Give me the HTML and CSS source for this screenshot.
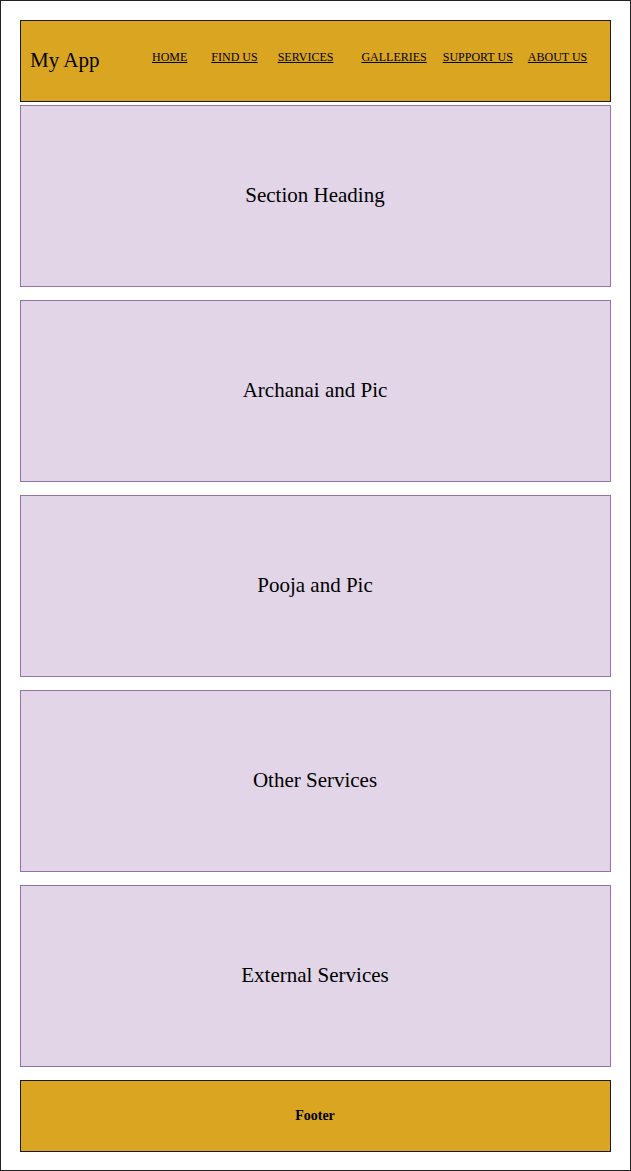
FILE: index.html
```html
<!DOCTYPE html>
<html>
<head>
<meta charset="utf-8">
<title>My App</title>
<link rel="stylesheet" href="styles.css">
</head>
<body>
<div class="frame">
  <header class="header">
    <div class="brand">My App</div>
    <nav class="nav">
      <a class="nav-link home" href="#">HOME</a>
      <a class="nav-link find" href="#">FIND US</a>
      <a class="nav-link services" href="#">SERVICES</a>
      <a class="nav-link galleries" href="#">GALLERIES</a>
      <a class="nav-link support" href="#">SUPPORT US</a>
      <a class="nav-link about" href="#">ABOUT US</a>
    </nav>
  </header>
  <main class="sections">
    <section class="section">Section Heading</section>
    <section class="section">Archanai and Pic</section>
    <section class="section">Pooja and Pic</section>
    <section class="section">Other Services</section>
    <section class="section">External Services</section>
  </main>
  <footer class="footer">Footer</footer>
</div>
</body>
</html>
```

FILE: styles.css
```css
* { box-sizing: border-box; }
html, body { margin: 0; padding: 0; background: #fff; }
body { font-family: "Liberation Serif", "Times New Roman", serif; color: #000; }

.frame {
  width: 631px;
  height: 1171px;
  border: 1px solid #222;
  padding: 19px 19px 0 19px;
  display: flex;
  flex-direction: column;
}

.header {
  height: 82px;
  background: #DAA520;
  border: 1px solid #1a1a1a;
  display: flex;
  align-items: center;
  padding-left: 9px;
}

.brand {
  font-size: 21px;
  width: 122px;
  margin-top: -1px;
}

.nav {
  display: flex;
  align-items: center;
  margin-top: -7px;
}

.nav-link {
  font-size: 12px;
  color: #000;
  text-decoration: underline;
  white-space: nowrap;
}
.find { margin-left: 24px; }
.services { margin-left: 20px; }
.galleries { margin-left: 28px; }
.support { margin-left: 16px; }
.about { margin-left: 15px; }

.sections {
  display: flex;
  flex-direction: column;
  gap: 13px;
  margin-top: 3px;
}

.section {
  height: 182px;
  background: #E1D5E7;
  border: 1px solid #9673A6;
  display: flex;
  align-items: center;
  justify-content: center;
  font-size: 21px;
  padding-bottom: 2px;
  padding-right: 1px;
}

.footer {
  margin-top: 13px;
  height: 72px;
  background: #DAA520;
  border: 1px solid #1a1a1a;
  display: flex;
  align-items: center;
  justify-content: center;
  font-size: 14px;
  font-weight: bold;
  padding-right: 1px;
}
```
